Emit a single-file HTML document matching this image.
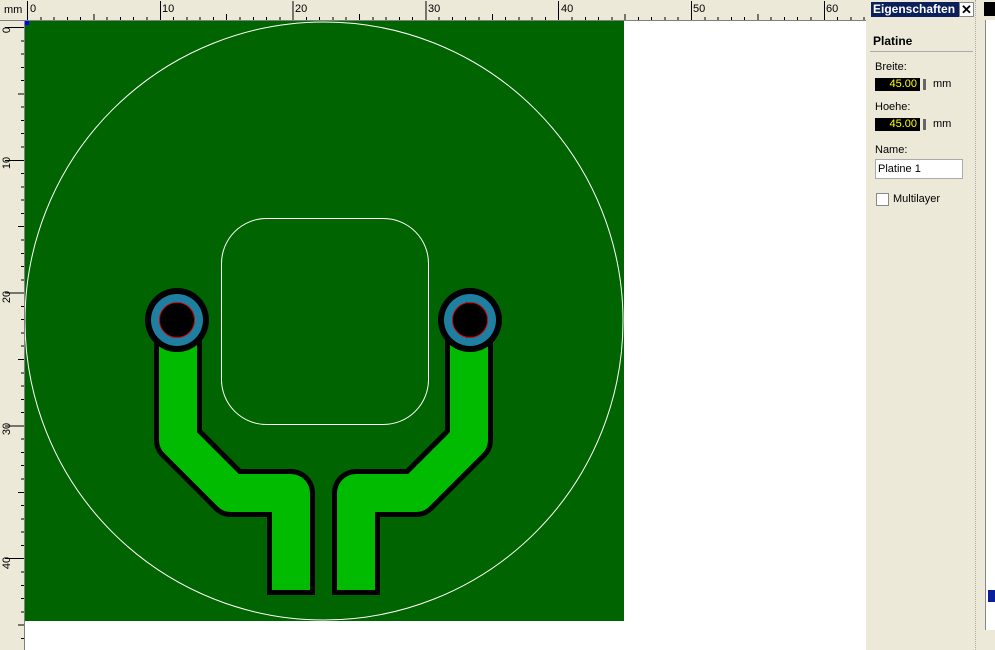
<!DOCTYPE html>
<html><head><meta charset="utf-8"><style>
body{margin:0;width:995px;height:650px;overflow:hidden;background:#ece9d8;font-family:"Liberation Sans",sans-serif;position:relative}
.abs{position:absolute}
#canvas{left:25px;top:21px;width:841px;height:629px;background:#fff}
#top{left:0;top:0;width:866px;height:20px;background:#ece9d8;border-bottom:1px solid #808080}
#left{left:0;top:0;width:24px;height:650px;background:#ece9d8;border-right:1px solid #808080}
.tl{position:absolute;font-size:11px;color:#000}
#panel{left:868px;top:0;width:107px;height:650px;background:#ece9d8;border-right:1px dotted #aaa}
.lbl{position:absolute;font-size:11px;left:7px}
.fld{position:absolute;left:7px;width:42px;height:13px;background:#000;color:#ff0;font-size:11px;text-align:right;padding-right:3px;line-height:13px}
</style></head><body>
<div class="abs" id="canvas"></div>
<svg class="abs" style="left:0;top:0" width="866" height="650">
<rect x="24" y="21" width="600" height="600" fill="#006400"/>
<circle cx="324" cy="321" r="299" fill="none" stroke="#fff" stroke-width="1"/>
<rect x="221.5" y="218.5" width="207" height="206" rx="45" fill="none" stroke="#fff" stroke-width="1"/>
<g stroke-linejoin="round" fill="none">
<path d="M178 320 V440 L231 493 H291 V595" stroke="#000" stroke-width="48"/>
<path d="M356 595 V493 H416 L469 440 V320" stroke="#000" stroke-width="48"/>
<path d="M178 320 V440 L231 493 H291 V590" stroke="#00bb00" stroke-width="38"/>
<path d="M356 590 V493 H416 L469 440 V320" stroke="#00bb00" stroke-width="38"/>
</g>
<circle cx="177" cy="320" r="32" fill="#000"/><circle cx="177" cy="320" r="26" fill="#1f7fa0"/><circle cx="177" cy="320" r="17.5" fill="#000" stroke="#c00" stroke-width="1"/>
<circle cx="470" cy="320" r="32" fill="#000"/><circle cx="470" cy="320" r="26" fill="#1f7fa0"/><circle cx="470" cy="320" r="17.5" fill="#000" stroke="#c00" stroke-width="1"/>
<rect x="25" y="21" width="4" height="4" fill="#00f"/>
</svg>
<div class="abs" id="top">
<div class="abs" style="left:27px;bottom:0;width:839px;height:3px;background:repeating-linear-gradient(90deg,#000 0 1px,transparent 1px 13.28px)"></div>
<div class="abs" style="left:27px;bottom:0;width:839px;height:6px;background:repeating-linear-gradient(90deg,#000 0 1px,transparent 1px 66.4px)"></div>
<div class="abs" style="left:27px;bottom:0;width:839px;height:19px;background:repeating-linear-gradient(90deg,#000 0 1px,transparent 1px 132.8px)"></div>
<span class="tl" style="left:4px;top:4px">mm</span>
<span class="tl" style="left:30px;top:3px">0</span><span class="tl" style="left:162px;top:3px">10</span><span class="tl" style="left:295px;top:3px">20</span><span class="tl" style="left:428px;top:3px">30</span><span class="tl" style="left:561px;top:3px">40</span><span class="tl" style="left:693px;top:3px">50</span><span class="tl" style="left:826px;top:3px">60</span>
</div>
<div class="abs" id="left" style="top:21px;height:629px">
<div class="abs" style="right:0;top:6px;width:3px;height:623px;background:repeating-linear-gradient(180deg,#000 0 1px,transparent 1px 13.28px)"></div>
<div class="abs" style="right:0;top:6px;width:6px;height:623px;background:repeating-linear-gradient(180deg,#000 0 1px,transparent 1px 66.4px)"></div>
<div class="abs" style="right:0;top:6px;width:19px;height:623px;background:repeating-linear-gradient(180deg,#000 0 1px,transparent 1px 132.8px)"></div>
<span class="tl" style="left:4px;top:3px;transform:rotate(-90deg)">0</span>
<span class="tl" style="left:1px;top:136px;transform:rotate(-90deg)">10</span>
<span class="tl" style="left:1px;top:270px;transform:rotate(-90deg)">20</span>
<span class="tl" style="left:1px;top:402px;transform:rotate(-90deg)">30</span>
<span class="tl" style="left:1px;top:536px;transform:rotate(-90deg)">40</span>
</div>
<div class="abs" id="panel">
<div class="abs" style="left:3px;top:2px;width:86px;height:15px;background:#0a1f5c;color:#fff;font-weight:bold;font-size:12px;line-height:15px;padding-left:2px">Eigenschaften</div>
<div class="abs" style="left:91px;top:2px;width:13px;height:13px;background:#fff;border:1px solid #888;font-size:13px;line-height:13px;text-align:center;font-weight:bold">✕</div>
<div class="abs" style="left:5px;top:34px;font-weight:bold;font-size:12px">Platine</div>
<div class="abs" style="left:2px;top:51px;width:103px;height:1px;background:#aaa"></div>
<div class="lbl" style="top:61px">Breite:</div>
<div class="fld" style="top:78px">45.00</div><div class="abs" style="left:55px;top:79px;width:3px;height:11px;background:#666"></div><div class="lbl" style="left:65px;top:78px">mm</div>
<div class="lbl" style="top:101px">Hoehe:</div>
<div class="fld" style="top:118px">45.00</div><div class="abs" style="left:55px;top:119px;width:3px;height:11px;background:#666"></div><div class="lbl" style="left:65px;top:118px">mm</div>
<div class="lbl" style="top:144px">Name:</div>
<div class="abs" style="left:7px;top:159px;width:84px;height:18px;background:#fff;border:1px solid #aaa;font-size:11px;line-height:18px;padding-left:2px">Platine 1</div>
<div class="abs" style="left:8px;top:193px;width:11px;height:11px;background:#fff;border:1px solid #888"></div>
<div class="lbl" style="left:25px;top:193px">Multilayer</div>
</div>
<div class="abs" style="left:984px;top:2px;width:11px;height:14px;background:#000"></div>
<div class="abs" style="left:985px;top:20px;width:10px;height:610px;background:#fff;border-left:1px solid #888"></div>
<div class="abs" style="left:988px;top:590px;width:7px;height:12px;background:#0a1f9c"></div>
</body></html>
